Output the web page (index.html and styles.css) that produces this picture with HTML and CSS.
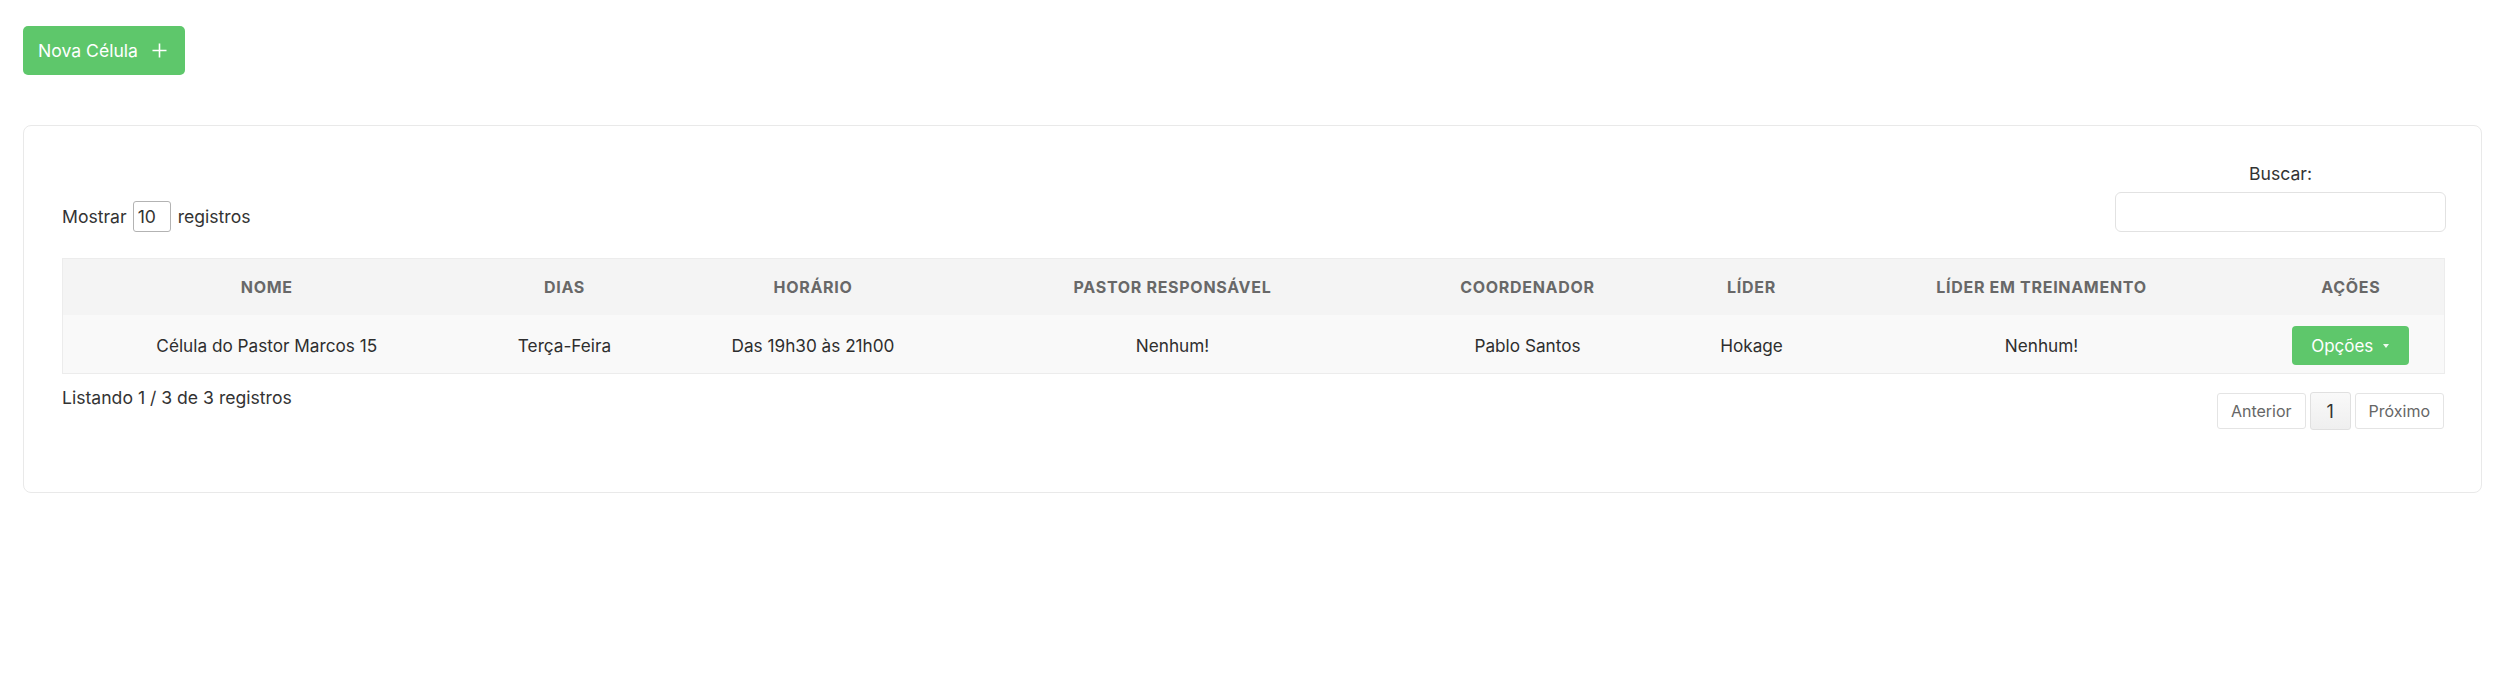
FILE: index.html
```html
<!DOCTYPE html>
<html lang="pt-BR">
<head>
<meta charset="utf-8">
<title>Células</title>
<link rel="stylesheet" href="styles.css">
</head>
<body>
<div class="page">
  <div class="actions-top">
    <button class="btn-new" type="button">Nova Célula
      <svg class="plus" width="15" height="15" viewBox="0 0 15 15" aria-hidden="true"><path d="M7.5 0.5V14.5M0.5 7.5H14.5" stroke="#fff" stroke-width="1.6" fill="none"/></svg>
    </button>
  </div>
  <section class="card">
    <div class="toolbar">
      <label class="length">Mostrar <select class="length-select"><option>10</option></select> registros</label>
      <div class="search">
        <label for="q" class="search-label">Buscar:</label>
        <input id="q" class="search-input" type="text">
      </div>
    </div>
    <table class="grid">
      <colgroup>
        <col class="c1"><col class="c2"><col class="c3"><col class="c4"><col class="c5"><col class="c6"><col class="c7"><col class="c8">
      </colgroup>
      <thead>
        <tr>
          <th>NOME</th>
          <th>DIAS</th>
          <th>HORÁRIO</th>
          <th>PASTOR RESPONSÁVEL</th>
          <th>COORDENADOR</th>
          <th>LÍDER</th>
          <th>LÍDER EM TREINAMENTO</th>
          <th>AÇÕES</th>
        </tr>
      </thead>
      <tbody>
        <tr>
          <td>Célula do Pastor Marcos 15</td>
          <td>Terça-Feira</td>
          <td>Das 19h30 às 21h00</td>
          <td>Nenhum!</td>
          <td>Pablo Santos</td>
          <td>Hokage</td>
          <td>Nenhum!</td>
          <td><button class="btn-opts" type="button">Opções <span class="caret"></span></button></td>
        </tr>
      </tbody>
    </table>
    <div class="footer">
      <div class="info">Listando 1 / 3 de 3 registros</div>
      <nav class="pager">
        <button class="pg" type="button">Anterior</button>
        <button class="pg pg-active" type="button">1</button>
        <button class="pg" type="button">Próximo</button>
      </nav>
    </div>
  </section>
</div>
</body>
</html>
```
FILE: styles.css
```css
* { box-sizing: border-box; }
html, body { margin: 0; background: #fff; }
body {
  font-family: Inter, "Noto Sans", "Liberation Sans", sans-serif;
  color: #333;
  font-size: 17.6px;
  line-height: 27px;
}
.page { padding: 26px 30px 0 23px; }
.actions-top { display: flex; }
.btn-new {
  display: inline-flex;
  align-items: center;
  gap: 14px;
  height: 49px;
  padding: 0 18px 0 15px;
  background: #5ec76b;
  color: #fff;
  border: none;
  border-radius: 5px;
  font-family: inherit;
  font-size: 17.6px;
}
.plus { display: block; }
.card {
  margin-top: 50px;
  border: 1px solid #e9e9e9;
  border-radius: 8px;
  padding: 34px 37px 38px 38px;
  background: #fff;
}
.toolbar {
  display: flex;
  justify-content: space-between;
  align-items: flex-end;
}
.length {
  display: flex;
  align-items: center;
  gap: 6px;
  font-size: 17.6px;
}
.length-select {
  appearance: none;
  -webkit-appearance: none;
  width: 38px;
  height: 31px;
  margin-right: 1px;
  padding: 0 0 0 4px;
  border: 1px solid #b3b3b3;
  border-radius: 3px;
  background: #fff;
  color: #333;
  font-family: inherit;
  font-size: 17.6px;
}
.search {
  display: flex;
  flex-direction: column;
  align-items: center;
  width: 331px;
  margin-right: -2px;
}
.search-label { margin-bottom: 5px; }
.search-input {
  width: 331px;
  height: 40px;
  border: 1px solid #e2e2e2;
  border-radius: 6px;
  background: #fff;
  font-family: inherit;
  font-size: 16px;
}
.grid {
  width: 100%;
  margin-top: 26px;
  border-collapse: collapse;
  table-layout: fixed;
  border: 1px solid #ececec;
}
.c1 { width: 408px; }
.c2 { width: 188px; }
.c3 { width: 309px; }
.c4 { width: 410px; }
.c5 { width: 300px; }
.c6 { width: 148px; }
.c7 { width: 432px; }
.c8 { width: 187px; }
.grid th {
  background: #f4f4f4;
  color: #686868;
  font-size: 16px;
  font-weight: 700;
  letter-spacing: 0.7px;
  line-height: 24px;
  padding: 16px 6px;
  text-align: center;
}
.grid td {
  background: #f9f9f9;
  color: #2e2e2e;
  font-size: 17.2px;
  line-height: 24px;
  padding: 11px 6px 8px;
  text-align: center;
  vertical-align: middle;
}
.btn-opts {
  display: inline-flex;
  align-items: center;
  gap: 10px;
  height: 39px;
  padding: 0 20px 0 19px;
  background: #5ec76b;
  color: #fff;
  border: none;
  border-radius: 4px;
  font-family: inherit;
  font-size: 17px;
  vertical-align: middle;
}
.caret {
  width: 0;
  height: 0;
  border-top: 4px solid rgba(255,255,255,0.9);
  border-left: 3.5px solid transparent;
  border-right: 3.5px solid transparent;
}
.footer {
  display: flex;
  justify-content: space-between;
  align-items: flex-start;
  margin-bottom: 24px;
}
.info { padding-top: 10px; font-size: 17.6px; }
.pager {
  display: flex;
  align-items: center;
  gap: 4px;
  margin-top: 18px;
}
.pg {
  height: 36px;
  padding: 0 13px;
  border: 1px solid #e4e4e4;
  border-radius: 3px;
  background: #fff;
  color: #666;
  font-family: inherit;
  font-size: 16px;
}
.pg-active {
  height: 38px;
  width: 41px;
  padding: 0;
  background: linear-gradient(#f9f9f9, #efefef);
  border-color: #e0e0e0;
  color: #333;
  font-size: 18px;
}
```
